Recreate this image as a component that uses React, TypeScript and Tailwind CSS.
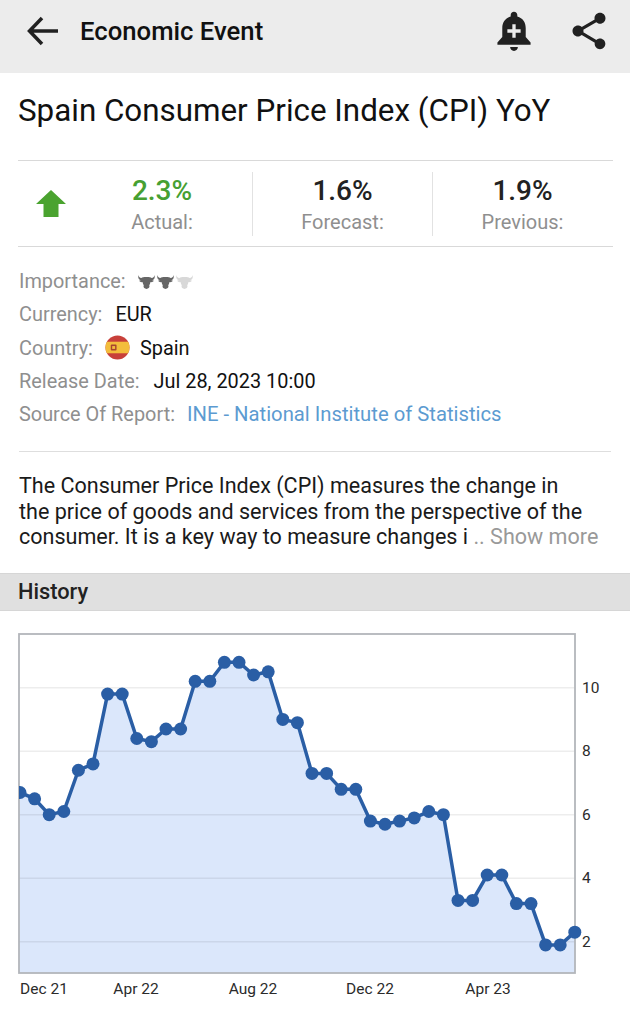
import { MdShare } from 'react-icons/md'

const values = [
  6.7, 6.5, 6.0, 6.1, 7.4, 7.6, 9.8, 9.8, 8.4, 8.3, 8.7, 8.7, 10.2, 10.2, 10.8, 10.8, 10.4, 10.5, 9.0, 8.9,
  7.3, 7.3, 6.8, 6.8, 5.8, 5.7, 5.8, 5.9, 6.1, 6.0, 3.3, 3.3, 4.1, 4.1, 3.2, 3.2, 1.9, 1.9, 2.3,
]

const left = 19
const right = 575
const top = 23
const bottom = 362

const yFor = (v: number) => 330.7 - (v - 2) * 31.75
const xFor = (i: number) => 20 + i * 14.6

function Bull({ className }: { className: string }) {
  return (
    <svg viewBox="0 0 16 13" className={className} fill="currentColor">
      <path d="M0.500 0C0.500 1.800 1.600 2.600 3.200 2.700C4 2.100 5 1.900 8 1.900C11 1.900 12 2.100 12.800 2.700C14.400 2.600 15.500 1.800 15.500 0C16.300 2.400 15.400 4.300 13.400 4.900L15 5.300C14.400 6.300 13.200 6.800 11.800 6.600L11 9H10.500L10.800 10.600C10.800 12 9.800 13 8 13C6.200 13 5.200 12 5.200 10.600L5.500 9H5L4.200 6.600C2.800 6.800 1.600 6.300 1 5.300L2.600 4.900C0.600 4.300-0.300 2.400 0.500 0Z" />
    </svg>
  )
}

function BellPlus() {
  return (
    <svg viewBox="0 0 34 38" className="h-[42px] w-[38px]">
      <path
        fill="#212121"
        d="M17 1.500c1.800 0 3 1.300 3 3v1.400c5 1.300 7.600 5.400 7.600 10.400v8.200l4.400 5v2H2v-2l4.400-5v-8.200c0-5 2.600-9.100 7.600-10.400V4.500c0-1.700 1.200-3 3-3Z"
      />
      <path fill="#212121" d="M13.500 33.500h7c0 2-1.500 3.500-3.500 3.500s-3.500-1.500-3.500-3.500Z" />
      <path fill="#ececec" d="M15.500 13h3v4.500H23v3h-4.500V25h-3v-4.500H11v-3h4.500Z" />
    </svg>
  )
}

function SpainFlag() {
  return (
    <svg viewBox="0 0 26 26" className="h-[25px] w-[25px]">
      <defs>
        <clipPath id="flag-clip">
          <circle cx="13" cy="13" r="12.500" />
        </clipPath>
      </defs>
      <g clipPath="url(#flag-clip)">
        <rect width="26" height="26" fill="#c8403a" />
        <rect y="7" width="26" height="12" fill="#f3bd3c" />
        <rect x="6" y="10" width="6" height="6" rx="1" fill="#a8442f" />
        <rect x="7.500" y="11.500" width="3" height="3" fill="#f3bd3c" />
      </g>
    </svg>
  )
}

function Stat({ value, label, color, border }: { value: string; label: string; color: string; border?: boolean }) {
  return (
    <div className={`flex h-[64px] w-[180px] flex-col items-center ${border ? 'border-l border-[#e2e2e2]' : ''}`}>
      <span className={`text-[28px] leading-[38px] font-medium ${color}`}>{value}</span>
      <span className="text-[20px] leading-[24px] text-[#8f8f8f]">{label}</span>
    </div>
  )
}

function Chart() {
  const line = values.map((v, i) => `${xFor(i)},${yFor(v)}`).join(' ')
  const area = `${left},${bottom} ${left},${yFor(6.7)} ${line} ${right},${bottom}`
  const ticks = [10, 8, 6, 4, 2]
  const months = [
    { label: 'Dec 21', x: 44 },
    { label: 'Apr 22', x: 136 },
    { label: 'Aug 22', x: 253 },
    { label: 'Dec 22', x: 370 },
    { label: 'Apr 23', x: 488 },
  ]
  return (
    <svg viewBox="0 0 630 414" className="block h-[414px] w-[630px]">
      <defs>
        <clipPath id="plot-clip">
          <rect x={left} y="0" width="611" height="414" />
        </clipPath>
      </defs>
      <polygon points={area} fill="#dbe7fb" />
      {ticks.map((t) => (
        <line key={t} x1={left} x2={right} y1={yFor(t)} y2={yFor(t)} stroke="#000" strokeOpacity="0.07" strokeWidth="1.500" />
      ))}
      <rect x={left} y={top} width={right - left} height={bottom - top} fill="none" stroke="#b3b6bb" strokeWidth="1.800" />
      <g clipPath="url(#plot-clip)">
        <polyline points={line} fill="none" stroke="#2a5ea5" strokeWidth="3.500" />
        {values.map((v, i) => (
          <circle key={i} cx={xFor(i)} cy={yFor(v)} r="6.500" fill="#2a5ea5" />
        ))}
      </g>
      {ticks.map((t) => (
        <text key={t} x="582" y={yFor(t) + 4.800} fontSize="15.500" fill="#2b2b2b">
          {t}
        </text>
      ))}
      {months.map((m) => (
        <text key={m.label} x={m.x} y="383" fontSize="15.500" fill="#2b2b2b" textAnchor="middle">
          {m.label}
        </text>
      ))}
    </svg>
  )
}

export default function App() {
  return (
    <div className="h-[1024px] w-[630px] overflow-hidden bg-white font-['Roboto',sans-serif] text-[#111]">
      <div className="flex h-[73px] items-center bg-[#ececec] pr-[19px] pb-[12px] pl-[27px]">
        <svg viewBox="0 0 32 30" className="h-[30px] w-[32px]" fill="none" stroke="#212121" strokeWidth="3.500">
          <path d="M31 15H3M15 2L2.500 15L15 28" />
        </svg>
        <h1 className="mt-[1px] ml-[21px] flex-1 text-[25.700px] font-medium text-[#111]">Economic Event</h1>
        <BellPlus />
        <MdShare size={44} color="#212121" className="ml-[34px]" />
      </div>

      <h2 className="mt-[15px] px-[18px] text-[31.350px] leading-[46px] font-normal">Spain Consumer Price Index (CPI) YoY</h2>

      <div className="mt-[26px] mr-[17px] ml-[18px] flex h-[87px] items-center border-y border-[#d9d9d9]">
        <div className="flex w-[55px] justify-center pl-[11px]">
          <svg viewBox="0 0 30 28" className="h-[28px] w-[30px]" fill="#4aa32f">
            <path d="M15 0L30 14H22.500V27H7.500V14H0Z" />
          </svg>
        </div>
        <div className="flex flex-1 justify-end pr-[1px]">
          <div className="flex">
            <Stat value="2.3%" label="Actual:" color="text-[#46a032]" />
            <Stat value="1.6%" label="Forecast:" color="text-[#222]" border />
            <Stat value="1.9%" label="Previous:" color="text-[#222]" border />
          </div>
        </div>
      </div>

      <div className="mx-[19px] mt-[18px] flex flex-col text-[19.900px] leading-[33.250px] text-[#8f8f8f]">
        <div className="flex items-center">
          <span>Importance:</span>
          <span className="ml-[12px] flex gap-[2px]">
            <Bull className="h-[14px] w-[17px] text-[#666]" />
            <Bull className="h-[14px] w-[17px] text-[#666]" />
            <Bull className="h-[14px] w-[17px] text-[#d8d8d8]" />
          </span>
        </div>
        <div className="flex items-center">
          <span>Currency:</span>
          <span className="ml-[13px] text-[#111]">EUR</span>
        </div>
        <div className="flex items-center">
          <span>Country:</span>
          <span className="ml-[12px] -translate-y-[1px]">
            <SpainFlag />
          </span>
          <span className="ml-[10px] text-[#111]">Spain</span>
        </div>
        <div className="flex items-center">
          <span>Release Date:</span>
          <span className="ml-[14px] text-[#111]">Jul 28, 2023 10:00</span>
        </div>
        <div className="flex items-center">
          <span>Source Of Report:</span>
          <span className="ml-[12px] text-[20.250px] text-[#5c9bd1]">INE - National Institute of Statistics</span>
        </div>
      </div>

      <div className="mx-[19px] mt-[20px] border-t border-[#dedede] pt-[21px] text-[21.550px] leading-[25.500px] text-[#1a1a1a]">
        <p>The Consumer Price Index (CPI) measures the change in</p>
        <p>the price of goods and services from the perspective of the</p>
        <p>
          consumer. It is a key way to measure changes i <span className="text-[#999]">.. Show more</span>
        </p>
      </div>

      <div className="mt-[23px] flex h-[38px] items-center border-y border-[#d6d6d6] bg-[#e0e0e0] px-[18px] pt-[2px] text-[21.800px] font-medium text-[#222]">
        History
      </div>

      <Chart />
    </div>
  )
}
